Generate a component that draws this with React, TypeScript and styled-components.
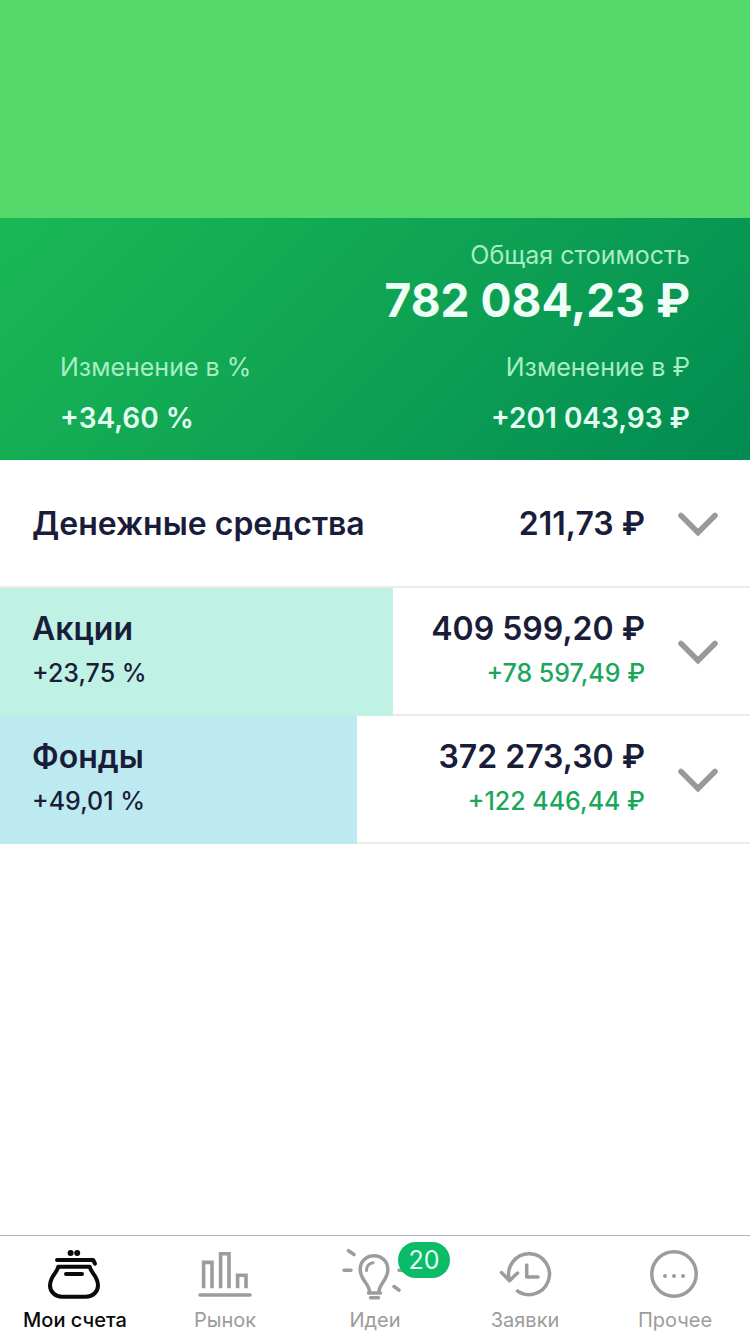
import React from "react";
import styled, { createGlobalStyle } from "styled-components";

const GlobalStyle = createGlobalStyle`
  *, *::before, *::after { box-sizing: border-box; }
  body {
    margin: 0;
    background: #ffffff;
    font-family: Inter, "Liberation Sans", sans-serif;
  }
`;

const Screen = styled.div`
  display: flex;
  flex-direction: column;
  min-height: 100vh;
`;

const Banner = styled.div`
  flex: none;
  height: 218px;
  background: #56d96b;
`;

const Summary = styled.header`
  padding: 20px 60px 22px;
  background: linear-gradient(135deg, #1ab855 0%, #0b9c53 65%, #028b51 100%);
`;

const Total = styled.div`
  display: flex;
  flex-direction: column;
  align-items: flex-end;
`;

const Changes = styled.div`
  display: flex;
  justify-content: space-between;
  margin-top: 22px;
`;

const Change = styled.div<{ $end?: boolean }>`
  display: flex;
  flex-direction: column;
  gap: 14px;
  align-items: ${(p) => (p.$end ? "flex-end" : "flex-start")};
`;

const Caption = styled.span`
  font-size: 25px;
  line-height: 34px;
  color: #a9edc4;
`;

const TotalValue = styled.strong`
  font-size: 46px;
  line-height: 56px;
  font-weight: 700;
  color: #effff8;
`;

const ChangeValue = styled.strong`
  font-size: 28px;
  line-height: 40px;
  font-weight: 600;
  color: #e2fff2;
`;

const Assets = styled.main`
  flex: 1;
`;

const AssetRow = styled.button<{ $share: number; $fill: string }>`
  display: flex;
  align-items: center;
  width: 100%;
  height: 128px;
  padding: 0 32px;
  border: 0;
  font: inherit;
  color: #1a1d3a;
  cursor: pointer;
  background:
    linear-gradient(${(p) => p.$fill}, ${(p) => p.$fill}) 0 0 / ${(p) => p.$share}% 100% no-repeat,
    linear-gradient(#ebebeb, #ebebeb) 0 100% / 100% 2px no-repeat,
    #ffffff;
`;

const AssetColumn = styled.span<{ $end?: boolean }>`
  display: flex;
  flex-direction: column;
  gap: 6px;
  flex: ${(p) => (p.$end ? "none" : "1")};
  align-items: ${(p) => (p.$end ? "flex-end" : "flex-start")};
`;

const AssetTitle = styled.span`
  font-size: 32px;
  line-height: 42px;
  font-weight: 600;
`;

const AssetChange = styled.span<{ $gain?: boolean }>`
  margin-bottom: 6px;
  font-size: 25px;
  line-height: 34px;
  font-weight: 500;
  color: ${(p) => (p.$gain ? "#1ba75b" : "inherit")};
`;

const Chevron = styled.svg`
  flex: none;
  width: 40px;
  height: 26px;
  margin-left: 33px;
`;

const TabBar = styled.nav`
  position: sticky;
  bottom: 0;
  display: flex;
  border-top: 1px solid #b2b2b2;
  background: #ffffff;
`;

const Tab = styled.a<{ $active?: boolean }>`
  flex: 1;
  display: flex;
  flex-direction: column;
  align-items: center;
  gap: 7px;
  padding: 12px 0 1px;
  font-size: 20px;
  line-height: 26px;
  font-weight: ${(p) => (p.$active ? 500 : 400)};
  text-decoration: none;
  color: ${(p) => (p.$active ? "#0a0a0a" : "#9c9c9c")};
`;

const IconBox = styled.span`
  position: relative;
  display: block;
  width: 68px;
  height: 52px;
`;

const TabIcon = styled.svg`
  display: block;
  width: 68px;
  height: 52px;
  fill: none;
  stroke: currentColor;
  stroke-width: 3.5;
  stroke-linecap: round;
  stroke-linejoin: round;
`;

const Badge = styled.span`
  position: absolute;
  top: -6px;
  left: 57px;
  min-width: 52px;
  padding: 0 10px;
  border-radius: 18px;
  background: #0abb68;
  color: #e2fff2;
  font-size: 25px;
  line-height: 36px;
  font-weight: 400;
  text-align: center;
`;

const PurseIcon = () => (
  <TabIcon viewBox="0 0 68 52" aria-hidden="true">
    <g fill="currentColor" stroke="none">
      <circle cx="29.6" cy="5" r="3" />
      <circle cx="36.2" cy="5" r="3" />
    </g>
    <path strokeWidth="4" d="M16 12H52.2L54 15.6" />
    <path
      strokeWidth="4"
      d="M17.200 18.800H48.800C49.800 25 57 28 57 37.500C57 44 51.500 48.800 45 48.800H21C14.500 48.800 9 44 9 37.500C9 28 16.200 25 17.200 18.800Z"
    />
    <path strokeWidth="4" d="M25 26H41" />
  </TabIcon>
);

const MarketIcon = () => (
  <TabIcon viewBox="0 0 68 52" aria-hidden="true">
    <g strokeLinecap="butt" strokeLinejoin="miter" strokeWidth="3.6">
      <path d="M12.600 40.300V14.400H21V40.300" />
      <path d="M29.600 40.300V5.700H38V40.300" />
      <path d="M46.600 40.300V27.300H55V40.300" />
    </g>
    <path d="M9 47H59" />
  </TabIcon>
);

const IdeasIcon = () => (
  <TabIcon viewBox="0 0 68 52" aria-hidden="true">
    <path d="M28.500 44C28.500 35.500 19.200 32.500 19.200 21.500C19.200 13.500 25.400 7.700 33 7.700S46.800 13.500 46.800 21.500C46.800 32.500 38 35.500 38 44" />
    <path d="M27.500 45H39.500M29.500 49.700H37.500" />
    <path strokeWidth="3" d="M25.500 22.500C25.500 18.500 28 15.200 32 14.700" />
    <path d="M7.500 2.700L13 6.500M3 22.300H10M58 22.300H64M53 38.500L58 42.200" />
  </TabIcon>
);

const OrdersIcon = () => (
  <TabIcon viewBox="0 0 68 52" aria-hidden="true">
    <path d="M25.300 42.200A20.400 20.400 0 1 0 18.300 31.500" strokeLinecap="butt" />
    <path d="M10.500 24.500L18.500 32.700L26.500 25" />
    <path d="M35.700 17V29H47" />
  </TabIcon>
);

const MoreIcon = () => (
  <TabIcon viewBox="0 0 68 52" aria-hidden="true">
    <circle cx="33" cy="26" r="22.200" />
    <g fill="currentColor" stroke="none">
      <circle cx="24" cy="28" r="2" />
      <circle cx="33" cy="28" r="2" />
      <circle cx="42" cy="28" r="2" />
    </g>
  </TabIcon>
);

const assets = [
  { title: "Денежные средства", value: "211,73 ₽", share: 0, fill: "transparent" },
  {
    title: "Акции",
    value: "409 599,20 ₽",
    percent: "+23,75 %",
    gain: "+78 597,49 ₽",
    share: 52.4,
    fill: "#bff2e4",
  },
  {
    title: "Фонды",
    value: "372 273,30 ₽",
    percent: "+49,01 %",
    gain: "+122 446,44 ₽",
    share: 47.6,
    fill: "#bceaf0",
  },
];

const tabs = [
  { label: "Мои счета", Icon: PurseIcon, active: true },
  { label: "Рынок", Icon: MarketIcon },
  { label: "Идеи", Icon: IdeasIcon, badge: 20 },
  { label: "Заявки", Icon: OrdersIcon },
  { label: "Прочее", Icon: MoreIcon },
];

export default function App() {
  return (
    <Screen>
      <GlobalStyle />
      <Banner />
      <Summary>
        <Total>
          <Caption>Общая стоимость</Caption>
          <TotalValue>782 084,23 ₽</TotalValue>
        </Total>
        <Changes>
          <Change>
            <Caption>Изменение в %</Caption>
            <ChangeValue>+34,60 %</ChangeValue>
          </Change>
          <Change $end>
            <Caption>Изменение в ₽</Caption>
            <ChangeValue>+201 043,93 ₽</ChangeValue>
          </Change>
        </Changes>
      </Summary>
      <Assets>
        {assets.map((asset) => (
          <AssetRow
            key={asset.title}
            type="button"
            aria-expanded={false}
            $share={asset.share}
            $fill={asset.fill}
          >
            <AssetColumn>
              <AssetTitle>{asset.title}</AssetTitle>
              {asset.percent && <AssetChange>{asset.percent}</AssetChange>}
            </AssetColumn>
            <AssetColumn $end>
              <AssetTitle>{asset.value}</AssetTitle>
              {asset.gain && <AssetChange $gain>{asset.gain}</AssetChange>}
            </AssetColumn>
            <Chevron viewBox="0 0 40 26" aria-hidden="true">
              <path
                d="M3 4.500L20 21.500L37 4.500"
                fill="none"
                stroke="#999999"
                strokeWidth="5.500"
                strokeLinecap="round"
              />
            </Chevron>
          </AssetRow>
        ))}
      </Assets>
      <TabBar>
        {tabs.map(({ label, Icon, active, badge }) => (
          <Tab key={label} href="#" $active={active} aria-current={active ? "page" : undefined}>
            <IconBox>
              <Icon />
              {badge && <Badge>{badge}</Badge>}
            </IconBox>
            {label}
          </Tab>
        ))}
      </TabBar>
    </Screen>
  );
}
